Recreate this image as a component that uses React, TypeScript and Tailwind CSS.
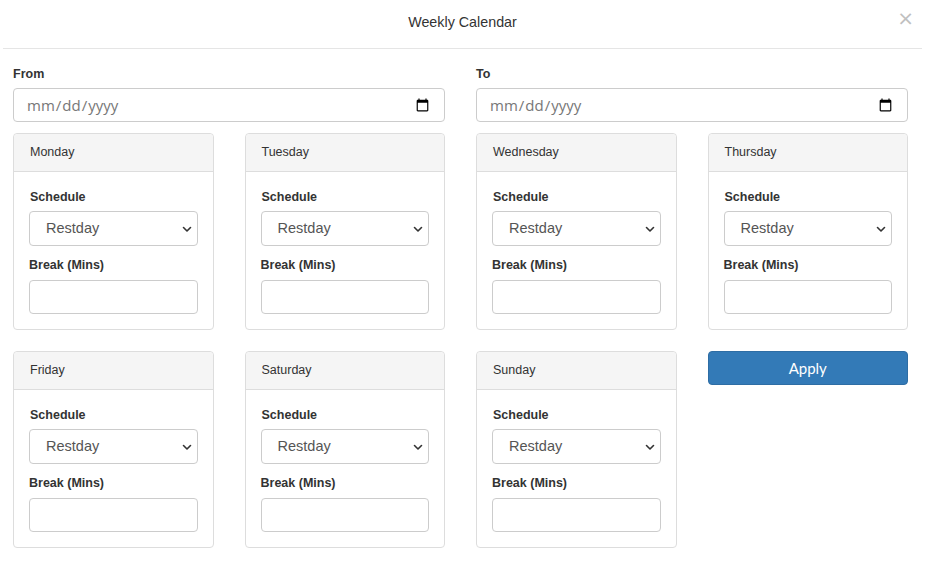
import React from "react";

const days = ["Monday", "Tuesday", "Wednesday", "Thursday", "Friday", "Saturday", "Sunday"];

function Chevron() {
  return (
    <svg width="12" height="12" viewBox="0 0 12 12" className="absolute right-[5px] top-1/2 -translate-y-1/2 pointer-events-none">
      <path d="M2.5 4.5 L6 8 L9.5 4.5" fill="none" stroke="#333" strokeWidth="1.6" strokeLinecap="round" strokeLinejoin="round" />
    </svg>
  );
}

function DayCard({ name }: { name: string }) {
  return (
    <div className="rounded-[4px] border border-[#dddddd] bg-white">
      <div className="h-[38px] flex items-center px-4 bg-[#f5f5f5] border-b border-[#dddddd] rounded-t-[4px] text-[12.5px] text-[#333]">
        {name}
      </div>
      <div className="px-[15px] pt-[15px] pb-[15px]">
        <label className="block text-[12.5px] leading-5 font-bold text-[#333] mb-1 pl-px">Schedule</label>
        <div className="relative">
          <select className="appearance-none w-full h-[35px] rounded-[4px] border border-[#cccccc] bg-white pl-4 text-[14.5px] text-[#555] outline-none">
            <option>Restday</option>
          </select>
          <Chevron />
        </div>
        <label className="block text-[12.5px] leading-5 font-bold text-[#333] mt-[9px] mb-[5px]">Break (Mins)</label>
        <input type="text" className="w-full h-[34px] rounded-[4px] border border-[#cccccc] bg-white px-3 outline-none" />
      </div>
    </div>
  );
}

export default function App() {
  return (
    <div className="w-[925px] h-[567px] bg-white font-['Liberation_Sans',Arial,sans-serif] text-[#333]">
      <div className="relative mx-[3px] h-[49px] border-b border-[#e5e5e5] flex items-center justify-center">
        <span className="text-[14.3px] text-[#333] -mt-[3px]">Weekly Calendar</span>
        <button className="absolute right-[8px] top-[8px] text-[#c0c0c0] text-[20px] leading-5 font-['DejaVu_Sans',sans-serif]">×</button>
      </div>
      <div className="pl-[13px] pr-[17px] pt-[15px]">
        <div className="grid grid-cols-2 gap-[31px]">
          {["From", "To"].map((l) => (
            <div key={l}>
              <label className="block text-[12.5px] leading-5 font-bold text-[#333] mb-1">{l}</label>
              <input
                type="date"
                className="w-full h-[34px] rounded-[4px] border border-[#cccccc] bg-white px-3 text-[15px] text-[#777] font-['Open_Sans',sans-serif] outline-none"
              />
            </div>
          ))}
        </div>
        <div className="grid grid-cols-4 gap-x-[31px] gap-y-[21px] mt-[11px]">
          {days.map((d) => (
            <DayCard key={d} name={d} />
          ))}
          <div>
            <button className="w-full h-[34px] rounded-[4px] border border-[#2e6da4] bg-[#337ab7] text-white text-[15px] font-['Lato',sans-serif]">
              Apply
            </button>
          </div>
        </div>
      </div>
    </div>
  );
}
